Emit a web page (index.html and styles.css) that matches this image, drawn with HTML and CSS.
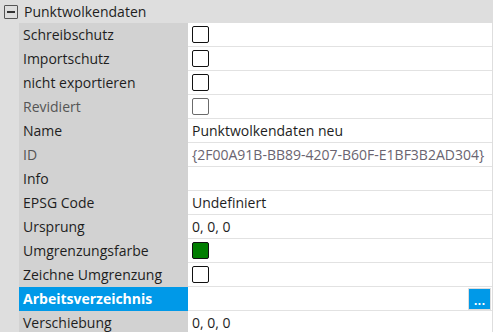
FILE: index.html
```html
<!DOCTYPE html>
<html lang="de">
<head>
  <meta charset="UTF-8">
  <title>Eigenschaften</title>
  <link rel="stylesheet" href="styles.css">
</head>
<body>

<div class="grid">
  <div class="group">
    <span class="expander"></span>
    <span>Punktwolkendaten</span>
  </div>

  <div class="rows">
    <div class="label">Schreibschutz</div>
    <div class="value"><span class="check"></span></div>

    <div class="label">Importschutz</div>
    <div class="value"><span class="check"></span></div>

    <div class="label">nicht exportieren</div>
    <div class="value"><span class="check"></span></div>

    <div class="label muted">Revidiert</div>
    <div class="value"><span class="check disabled"></span></div>

    <div class="label">Name</div>
    <div class="value">Punktwolkendaten neu</div>

    <div class="label muted">ID</div>
    <div class="value muted">{2F00A91B-BB89-4207-B60F-E1BF3B2AD304}</div>

    <div class="label">Info</div>
    <div class="value"></div>

    <div class="label">EPSG Code</div>
    <div class="value">Undefiniert</div>

    <div class="label">Ursprung</div>
    <div class="value">0, 0, 0</div>

    <div class="label">Umgrenzungsfarbe</div>
    <div class="value"><span class="swatch"></span></div>

    <div class="label">Zeichne Umgrenzung</div>
    <div class="value"><span class="check"></span></div>

    <div class="label selected">Arbeitsverzeichnis</div>
    <div class="value editing"><button class="browse">...</button></div>

    <div class="label">Verschiebung</div>
    <div class="value">0, 0, 0</div>
  </div>
</div>

</body>
</html>
```

FILE: styles.css
```css
body {
  margin: 0;
  background: #dedede;
  font-family: 'Open Sans', Arial, sans-serif;
  font-size: 14px;
  color: #1e1e1e;
  overflow: hidden;
}
.grid {
  width: 492px;
}
.group {
  height: 23px;
  display: flex;
  align-items: center;
  gap: 6px;
  padding-left: 4px;
}
.expander {
  width: 12px;
  height: 12px;
  border: 1px solid #555;
  border-radius: 1px;
  position: relative;
}
.expander::after {
  content: '';
  position: absolute;
  left: 2px;
  right: 2px;
  top: 5px;
  height: 2px;
  background: #333;
}
.rows {
  display: grid;
  grid-template-columns: 169px 1fr;
  margin-left: 19px;
}
.label {
  height: 24px;
  line-height: 24px;
  padding-left: 4px;
  background: #d2d2d2;
  white-space: nowrap;
}
.label.muted {
  color: #555;
}
.label.selected {
  background: #0099e8;
  color: #fff;
  font-weight: bold;
}
.value {
  height: 23px;
  border-bottom: 1px solid #e2e2e2;
  background: #fff;
  display: flex;
  align-items: center;
  padding-left: 4px;
  white-space: nowrap;
}
.value.muted {
  color: #6a6470;
}
.value.editing {
  justify-content: flex-end;
  padding-right: 1px;
}
.check {
  width: 15px;
  height: 15px;
  border: 1px solid #111;
  border-radius: 2px;
  background: #fff;
}
.check.disabled {
  border-color: #6b6b6b;
}
.swatch {
  width: 15px;
  height: 15px;
  border: 1px solid #111;
  border-radius: 2px;
  background: #007d00;
}
.browse {
  width: 23px;
  height: 22px;
  padding: 0;
  border: 1px solid #ddd;
  background: #0099e8;
  color: #fff;
  font-family: 'DejaVu Sans', sans-serif;
  font-size: 10px;
  font-weight: bold;
  line-height: 26px;
}
```
